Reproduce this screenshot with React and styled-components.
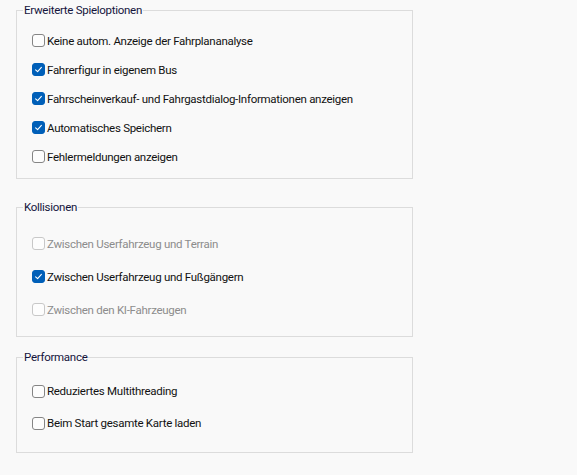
import React from "react";
import styled, { createGlobalStyle } from "styled-components";

const Global = createGlobalStyle`
	html, body {
		margin: 0;
		background: #f9f9f9;
	}
	body {
		font-family: Roboto, "Noto Sans", sans-serif;
		font-size: 11.5px;
		letter-spacing: -0.28px;
		color: #1a1a1a;
	}
`;

const Page = styled.div`
	width: 577px;
	height: 475px;
	padding-top: 2px;
	box-sizing: border-box;
`;

const Group = styled.fieldset`
	width: 397px;
	box-sizing: border-box;
	margin: 0 0 ${(p) => p.$after}px 16px;
	padding: ${(p) => p.$top}px 0 ${(p) => p.$bottom}px 15px;
	border: 1px solid #dcdcdc;
	min-inline-size: 0;
`;

const Title = styled.legend`
	margin-left: -9px;
	padding: 0 1px;
	line-height: 16px;
	color: #14143c;
`;

const Row = styled.label`
	display: flex;
	align-items: center;
	gap: 2px;
	height: ${(p) => p.$h}px;
	color: ${(p) => (p.$disabled ? "#8c8c8c" : "#111")};
	white-space: nowrap;
`;

const Box = styled.span`
	width: 13px;
	height: 13px;
	box-sizing: border-box;
	border-radius: 3px;
	flex: none;
	display: flex;
	align-items: center;
	justify-content: center;
	background: ${(p) => (p.$checked ? "#005fb8" : "#fdfdfd")};
	border: 1px solid
		${(p) => (p.$checked ? "#005fb8" : p.$disabled ? "#c8c8c8" : "#858585")};
`;

function Check({ label, checked, disabled, h }) {
	return (
		<Row $h={h} $disabled={disabled}>
			<Box $checked={checked} $disabled={disabled}>
				{checked && (
					<svg width="9" height="9" viewBox="0 0 9 9">
						<path
							d="M1.6 4.8 L3.6 6.7 L7.4 2.4"
							fill="none"
							stroke="#fff"
							strokeWidth="1.1"
							strokeLinecap="round"
							strokeLinejoin="round"
						/>
					</svg>
				)}
			</Box>
			{label}
		</Row>
	);
}

const groups = [
	{
		title: "Erweiterte Spieloptionen",
		h: 29,
		top: 8,
		bottom: 7,
		after: 20,
		items: [
			["Keine autom. Anzeige der Fahrplananalyse", false],
			["Fahrerfigur in eigenem Bus", true],
			["Fahrscheinverkauf- und Fahrgastdialog-Informationen anzeigen", true],
			["Automatisches Speichern", true],
			["Fehlermeldungen anzeigen", false],
		],
	},
	{
		title: "Kollisionen",
		h: 33,
		top: 12,
		bottom: 10,
		after: 12,
		items: [
			["Zwischen Userfahrzeug und Terrain", false, true],
			["Zwischen Userfahrzeug und Fußgängern", true],
			["Zwischen den KI-Fahrzeugen", false, true],
		],
	},
	{
		title: "Performance",
		h: 32,
		top: 10,
		bottom: 13,
		after: 0,
		items: [
			["Reduziertes Multithreading", false],
			["Beim Start gesamte Karte laden", false],
		],
	},
];

export default function App() {
	return (
		<Page>
			<Global />
			{groups.map((g) => (
				<Group key={g.title} $top={g.top} $bottom={g.bottom} $after={g.after}>
					<Title>{g.title}</Title>
					{g.items.map(([label, checked, disabled]) => (
						<Check key={label} label={label} checked={checked} disabled={disabled} h={g.h} />
					))}
				</Group>
			))}
		</Page>
	);
}
